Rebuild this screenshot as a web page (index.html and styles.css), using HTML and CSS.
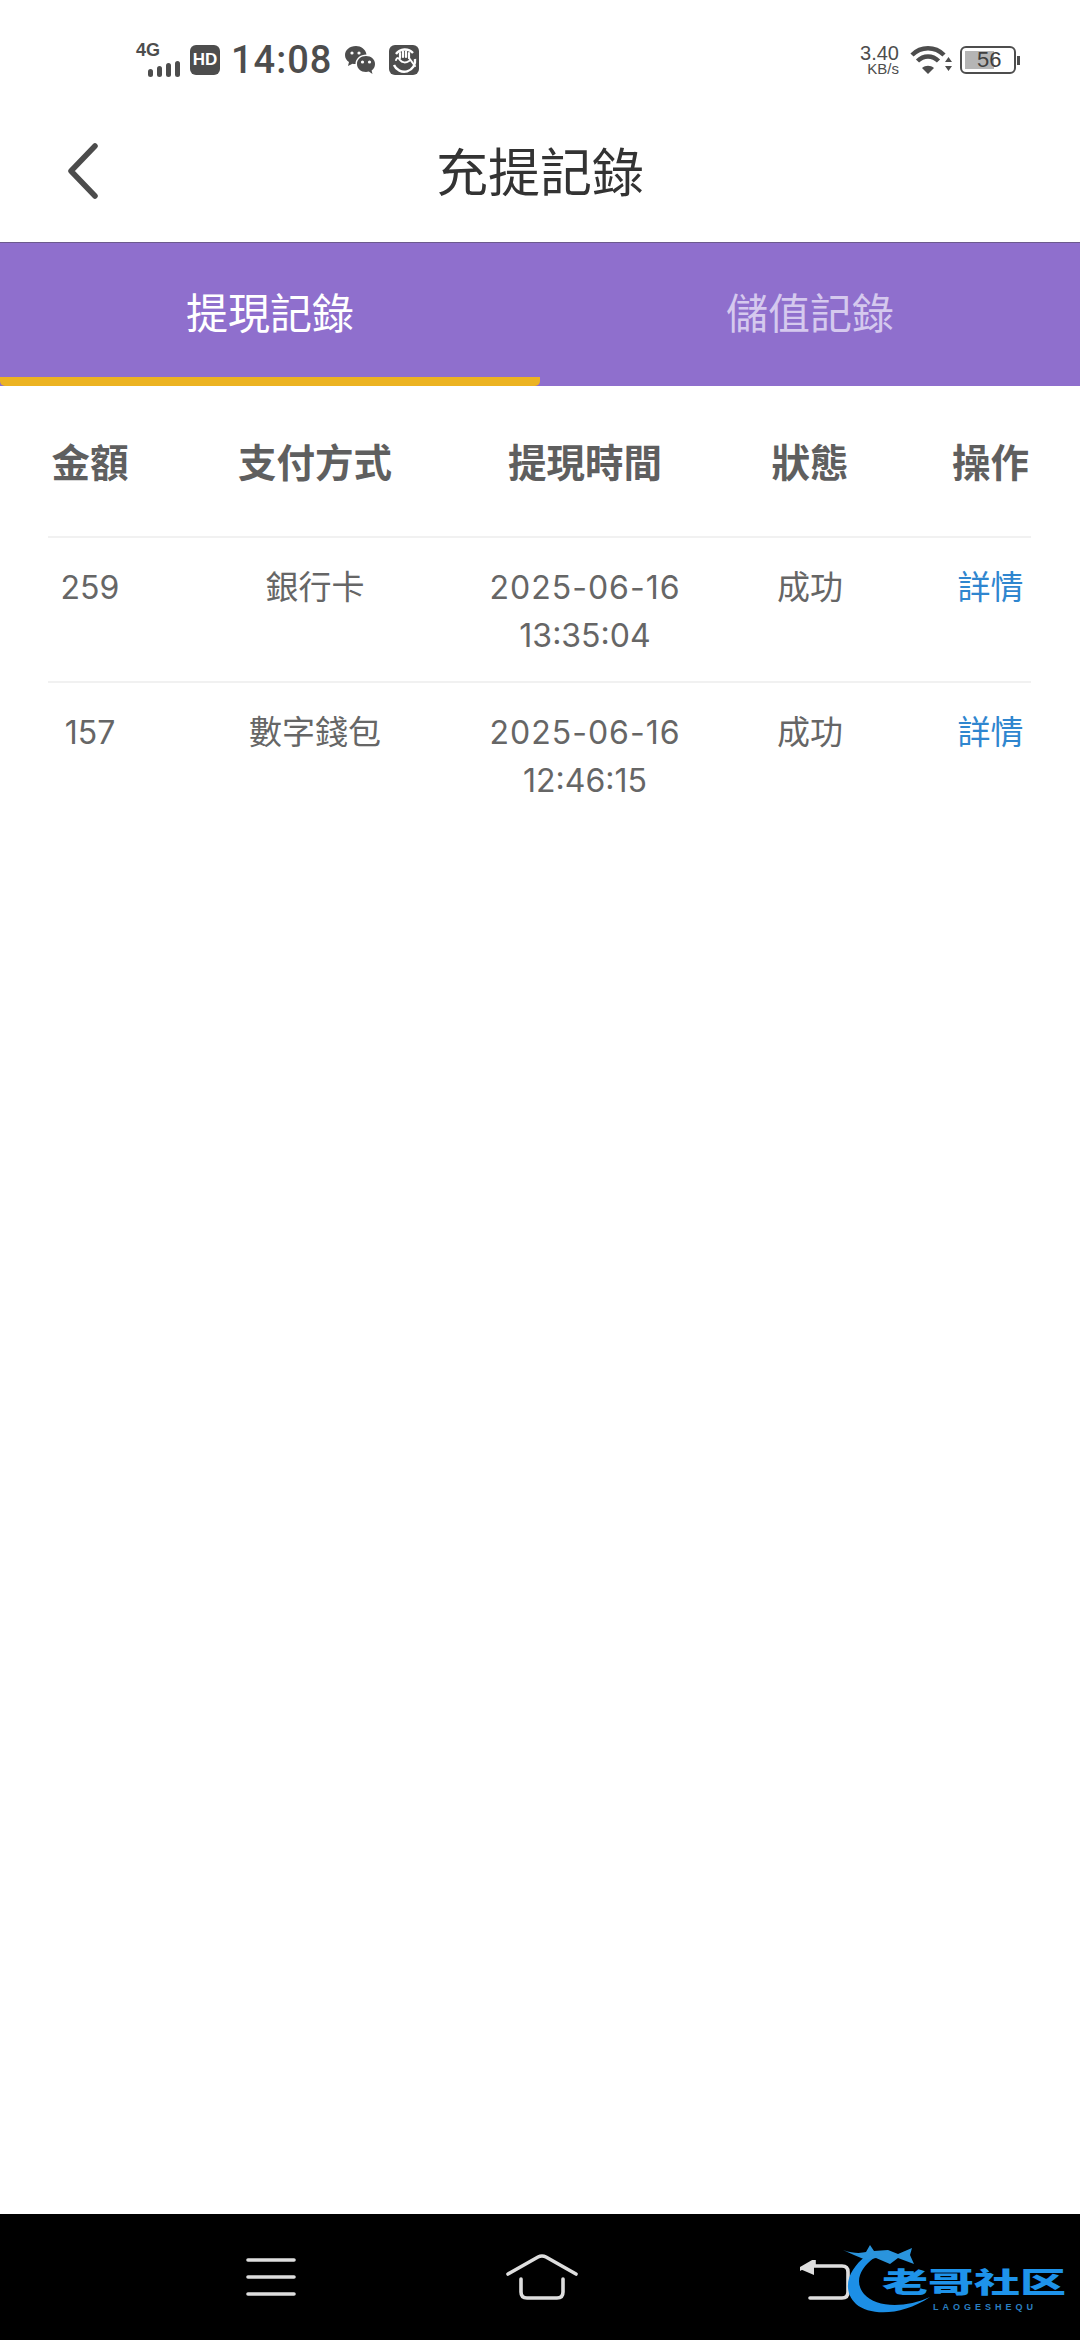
FILE: index.html
```html
<!DOCTYPE html>
<html lang="zh-Hant">
<head>
    <meta charset="UTF-8">
    <meta name="viewport" content="width=device-width, initial-scale=1.0">
    <title>充提記錄</title>
    <link rel="stylesheet" href="styles.css">
</head>
<body>
    <div class="page">
        <div class="status-bar">
            <div class="net">
                <span class="net-label">4G</span>
                <div class="signal"><i class="s1"></i><i class="s2"></i><i class="s3"></i><i class="s4"></i></div>
            </div>
            <span class="hd">HD</span>
            <span class="clock">14:08</span>
            <svg class="icon-wechat" width="32" height="30" viewBox="0 0 32 30">
                <path d="M12 1C5.500 1 1 5 1 10c0 3 1.500 5.500 4 7l-1 4 4.500-2.300c1 .3 2 .4 3 .4 0-5.500 4.500-9.600 11-9.600C21.500 4 17 1 12 1z" fill="#4d4d4d"/>
                <path d="M22 11c-5.200 0-9 3.500-9 8s3.800 8 9 8c1 0 2-.1 2.800-.4l3.700 2.400-.9-3.500c2.200-1.500 3.400-3.900 3.400-6.500 0-4.500-3.800-8-9-8z" fill="#4d4d4d"/>
                <circle cx="8" cy="8" r="1.600" fill="#fff"/><circle cx="15" cy="8" r="1.600" fill="#fff"/>
                <circle cx="18.500" cy="17" r="1.600" fill="#fff"/><circle cx="25.500" cy="17" r="1.600" fill="#fff"/>
            </svg>
            <svg class="icon-hand" width="30" height="30" viewBox="0 0 30 30">
                <rect width="30" height="30" rx="6" fill="#4d4d4d"/>
                <path d="M7 9A11 11 0 0 1 24 8M26 14A11 11 0 0 1 5 20" fill="none" stroke="#fff" stroke-width="2.400"/>
                <path d="M11 13V8M14 12V6.500M17 12V6.500M20 13V8" stroke="#fff" stroke-width="2.200" fill="none" stroke-linecap="round"/>
                <path d="M7 15c1-3 3-2 4 0 2 3 6 3 9 1M20 13l6 8" stroke="#fff" stroke-width="2" fill="none" stroke-linecap="round"/>
            </svg>
            <div class="spacer"></div>
            <div class="speed"><span>3.40</span><span class="speed-unit">KB/s</span></div>
            <svg class="icon-wifi" width="42" height="30" viewBox="0 0 42 30">
                <path d="M2 10C11 1 25 1 34 10" fill="none" stroke="#4d4d4d" stroke-width="4.500"/>
                <path d="M7.500 16C13.500 10 22.500 10 28.500 16" fill="none" stroke="#4d4d4d" stroke-width="4.500"/>
                <path d="M12 23l6 6 6-6c-3.500-3-8.500-3-12 0z" fill="#4d4d4d"/>
                <path d="M35 17l3.500-5 3.500 5zM35 21h7l-3.500 5z" fill="#4d4d4d"/>
            </svg>
            <div class="battery">
                <div class="battery-fill"></div>
                <span class="battery-num">56</span>
            </div>
            <div class="battery-nub"></div>
        </div>

        <div class="title-bar">
            <svg class="back" width="32" height="56" viewBox="0 0 32 56">
                <path d="M28 3L4 28l24 25" fill="none" stroke="#4c4c4c" stroke-width="5.500" stroke-linecap="round" stroke-linejoin="round"/>
            </svg>
            <h1>充提記錄</h1>
        </div>

        <div class="tabs">
            <div class="tab active">提現記錄</div>
            <div class="tab">儲值記錄</div>
        </div>

        <div class="records">
            <div class="row head">
                <div class="c1">金額</div><div class="c2">支付方式</div><div class="c3">提現時間</div><div class="c4">狀態</div><div class="c5">操作</div>
            </div>
            <div class="row">
                <div class="c1 num">259</div><div class="c2">銀行卡</div><div class="c3 num"><span class="date">2025-06-16</span><br>13:35:04</div><div class="c4">成功</div><div class="c5 link">詳情</div>
            </div>
            <div class="row">
                <div class="c1 num">157</div><div class="c2">數字錢包</div><div class="c3 num"><span class="date">2025-06-16</span><br>12:46:15</div><div class="c4">成功</div><div class="c5 link">詳情</div>
            </div>
        </div>

        <div class="nav">
            <svg class="nav-menu" width="50" height="38" viewBox="0 0 50 38">
                <path d="M2 2h46M2 19h46M2 36h46" stroke="#dedede" stroke-width="3.600" stroke-linecap="round"/>
            </svg>
            <svg class="nav-home" width="72" height="46" viewBox="0 0 72 46">
                <path d="M2 20L32 3q4-2 8 0l30 17" fill="none" stroke="#dedede" stroke-width="3.600" stroke-linecap="round"/>
                <path d="M15 25v13q0 6 6 6h30q6 0 6-6V25" fill="none" stroke="#dedede" stroke-width="3.600" stroke-linecap="round"/>
            </svg>
            <svg class="nav-back" width="50" height="42" viewBox="0 0 50 42">
                <path d="M0 9L14 1v5h28q6 0 6 6v20q0 6-6 6H10" fill="none" stroke="#dedede" stroke-width="3.600" stroke-linecap="round"/>
                <path d="M0 9L14 1v14z" fill="#dedede"/>
            </svg>
            <div class="mark">
                <svg class="mark-dragon" width="100" height="76" viewBox="0 0 100 76">
                    <path d="M26 12C10 24 0 44 16 60c14 12 46 12 74-7-24 11-54 11-66-3-10-12-4-26 10-36z" fill="#1c8fe6"/>
                    <path d="M3 6c11 4 19 3 23 2l4-7 4 6 14-1 10 4 14-6-2 7 4 9-16-6-8 6-14-6-10 2-12-5z" fill="#2a94dc"/>
                </svg>
                <span class="mark-name">老哥社区</span>
                <span class="mark-sub">LAOGESHEQU</span>
            </div>
        </div>
    </div>
</body>
</html>
```
FILE: styles.css
```css
* { box-sizing: border-box; }
body { margin: 0; background-color: #fff; font-family: "Noto Sans CJK TC", "Noto Sans", sans-serif; }
.page { width: 1080px; height: 2340px; display: flex; flex-direction: column; }

/* status bar */
.status-bar { height: 80px; padding: 40px 60px 0 136px; display: flex; align-items: center; color: #4d4d4d; flex-shrink: 0; }
.net { width: 48px; height: 36px; display: flex; flex-direction: column; margin-right: 6px; position: relative; }
.net-label { font: bold 18px/17px "Liberation Sans", sans-serif; }
.signal { display: flex; align-items: flex-end; gap: 4px; margin: -1px 0 0 12px; height: 19px; }
.signal i { width: 5px; background-color: #4d4d4d; border-radius: 2.500px; display: block; }
.s1 { height: 8px; }
.s2 { height: 11px; }
.s3 { height: 14px; }
.s4 { height: 16px; }
.hd { width: 30px; height: 30px; background-color: #4d4d4d; color: #fff; border-radius: 6px; font: bold 17px/30px "Liberation Sans", sans-serif; text-align: center; }
.clock { font: 500 38px/40px Roboto, sans-serif; margin-left: 11px; letter-spacing: 1px; width: 100px; }
.icon-wechat { margin-left: 13px; }
.icon-hand { margin-left: 13px; }
.spacer { flex: 1; }
.speed { display: flex; flex-direction: column; align-items: flex-end; font: 20px/17px "Liberation Sans", sans-serif; width: 46px; margin-right: 11px; }
.speed-unit { font-size: 15px; line-height: 14px; }
.icon-wifi { margin-right: 8px; }
.battery { width: 56px; height: 28px; border: 2.500px solid #4d4d4d; border-radius: 6px; padding: 3px; position: relative; font: 22px/23px "Liberation Sans", sans-serif; text-align: center; }
.battery-fill { width: 29px; height: 100%; background-color: #b5b5b5; }
.battery-num { position: absolute; left: 15px; top: 0; color: #3f3f3f; }
.battery-nub { width: 3px; height: 9px; background-color: #4d4d4d; margin-left: 1px; }

/* title */
.title-bar { height: 163px; display: flex; align-items: center; justify-content: center; position: relative; border-bottom: 1px solid #6c5a8d; flex-shrink: 0; padding-top: 17px; }
.title-bar h1 { margin: 0; font-size: 52px; font-weight: 400; color: #333; }
.back { position: absolute; left: 67px; top: 63px; }

/* tabs */
.tabs { height: 143px; display: flex; background-color: #8f6fcd; flex-shrink: 0; }
.tab { flex: 1; text-align: center; font-size: 42px; line-height: 135px; color: #d5c9ee; }
.tab.active { color: #fff; border-bottom: 9px solid #ecb322; border-radius: 0 0 5px 5px; }

/* records */
.records { flex: 1; padding: 0 49px 0 48px; color: #666; }
.row { display: grid; grid-template-columns: 84px 338px 230px 220px 111px; text-align: center; font-size: 33px; line-height: 48px; padding: 23px 0 0; border-bottom: 2px solid #f1f1f1; height: 145px; }
.row:last-child { border-bottom: none; }
.head { height: 152px; padding: 0 0 3px; align-items: center; font-size: 38.500px; font-weight: 700; color: #5f5f5f; }
.num { font-family: Inter, sans-serif; font-size: 32px; padding-top: 3px; }
.date { letter-spacing: 1px; }
.c2 { padding-left: 28px; }
.c5 { padding-left: 30px; }
.link { color: #2f86cf; }

/* bottom nav */
.nav { height: 126px; background-color: #000; display: flex; position: relative; flex-shrink: 0; padding-left: 246px; }
.nav-menu { margin-top: 44px; }
.nav-home { margin: 40px 0 0 210px; }
.nav-back { margin: 46px 0 0 222px; }
.mark { position: absolute; left: 840px; top: 30px; width: 240px; height: 90px; }
.mark-dragon { position: absolute; left: 0; top: 0; }
.mark-name { position: absolute; left: 42px; top: 21px; font: 900 46px/32px "Noto Sans CJK SC", sans-serif; color: #1e93ea; white-space: nowrap; transform: scaleY(.62); }
.mark-sub { position: absolute; left: 93px; top: 58px; font: bold 9px/10px "Liberation Sans", sans-serif; letter-spacing: 4px; color: #2a7fc0; }
```
